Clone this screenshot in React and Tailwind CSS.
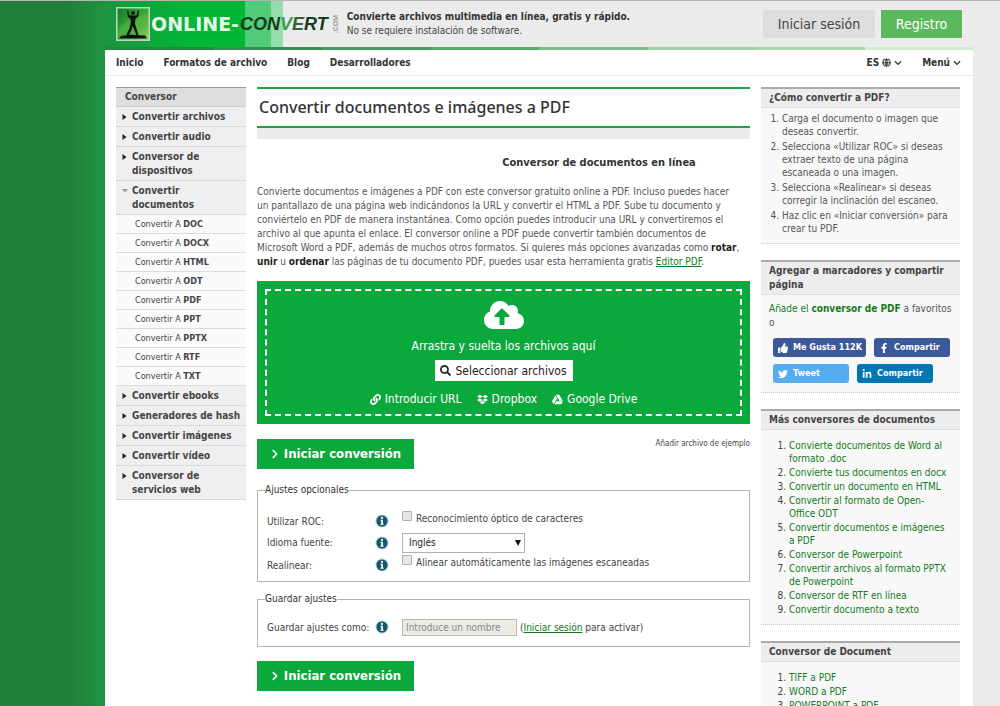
import clsx from "clsx";
import {
  FaChevronDown,
  FaChevronRight,
  FaCloudUploadAlt,
  FaDropbox,
  FaFacebookF,
  FaGlobe,
  FaGoogleDrive,
  FaLink,
  FaLinkedinIn,
  FaSearch,
  FaThumbsUp,
  FaTwitter,
} from "react-icons/fa";

const documentFormats = ["DOC", "DOCX", "HTML", "ODT", "PDF", "PPT", "PPTX", "RTF", "TXT"];

const menu = [
  { label: "Convertir archivos" },
  { label: "Convertir audio" },
  { label: "Conversor de dispositivos" },
  { label: "Convertir documentos", children: documentFormats },
  { label: "Convertir ebooks" },
  { label: "Generadores de hash" },
  { label: "Convertir imágenes" },
  { label: "Convertir vídeo" },
  { label: "Conversor de servicios web" },
];

const steps = [
  "Carga el documento o imagen que deseas convertir.",
  "Selecciona «Utilizar ROC» si deseas extraer texto de una página escaneada o una imagen.",
  "Selecciona «Realinear» si deseas corregir la inclinación del escaneo.",
  "Haz clic en «Iniciar conversión» para crear tu PDF.",
];

const moreConverters = [
  "Convierte documentos de Word al formato .doc",
  "Convierte tus documentos en docx",
  "Convertir un documento en HTML",
  "Convertir al formato de Open-Office ODT",
  "Convertir documentos e imágenes a PDF",
  "Conversor de Powerpoint",
  "Convertir archivos al formato PPTX de Powerpoint",
  "Conversor de RTF en línea",
  "Convertir documento a texto",
];

const documentConverters = ["TIFF a PDF", "WORD a PDF", "POWERPOINT a PDF"];

function Logo() {
  return (
    <a href="#" className="flex items-center" aria-label="Online-Convert.com">
      <svg viewBox="0 0 34 34" className="size-[34px] shrink-0">
        <defs>
          <linearGradient id="logo-bg" x1="0" y1="0" x2="1" y2="1">
            <stop offset="0" stopColor="#0e7a2c" />
            <stop offset="0.5" stopColor="#3fa63c" />
            <stop offset="1" stopColor="#8ccf5a" />
          </linearGradient>
        </defs>
        <rect x="0.75" y="0.75" width="32.5" height="32.5" fill="url(#logo-bg)" stroke="#b9d9bd" strokeWidth="1.5" />
        <path d="M2 24 Q10 10 32 8 V20 Q16 18 2 30Z" fill="#5cbb3f" opacity="0.5" />
        <circle cx="17" cy="6" r="2" fill="#0b160c" />
        <path
          d="M11 3.6 L12.4 4 L13.2 8.2 L15.6 8.4 L18.6 8.4 L20.6 8.2 L21.6 4 L23 3.6 L22.2 9.6 L19.4 12 L19 17 L20.6 22 L22.6 28.6 L20.4 28.6 L18.4 23 L16.8 19 L15.2 23.6 L12.6 28.6 L10.2 28.6 L13.2 22 L14.6 17 L14.6 12 L11.8 9.8Z"
          fill="#0b160c"
        />
        <path d="M3 31.5 L5 29 L9 28.6 L14 27.6 L22 28.2 L29 28.6 L31 31.5Z" fill="#0b160c" />
      </svg>
      <span className="ml-px font-['DejaVu_Sans'] text-[19px] leading-5 font-bold text-[#e6f8e6]">ONLINE-</span>
      <span className="ml-px font-['Liberation_Sans'] text-[18px] leading-5 font-bold text-[#16391f] italic">
        CON<span className="text-[#35a04c]">V</span>
        <span className="text-[#35603f]">E</span>RT
      </span>
      <span className="ml-1 rotate-180 font-['Liberation_Sans'] text-[7px] leading-[8px] font-bold text-[#9b9b9b] [writing-mode:vertical-rl]">
        .COM
      </span>
    </a>
  );
}

function Header() {
  return (
    <header className="flex h-[46px] shrink-0 items-center px-[11px]">
      <Logo />
      <div className="ml-[7px] text-[10px] leading-[14px]">
        <p className="font-bold text-[#333]">Convierte archivos multimedia en línea, gratis y rápido.</p>
        <p className="text-[#444]">No se requiere instalación de software.</p>
      </div>
      <div className="ml-auto flex gap-[6px] text-[14px] leading-7">
        <button type="button" className="w-28 bg-[#dedede] text-[#444]">
          Iniciar sesión
        </button>
        <button type="button" className="w-[81px] bg-[#5cb85c] text-white">
          Registro
        </button>
      </div>
    </header>
  );
}

function StripeBar() {
  return (
    <div className="flex h-[3px] shrink-0">
      <div className="flex-1 bg-[#1f8a3c]" />
      <div className="flex-1 bg-[#3a8f50]" />
      <div className="flex-1 bg-[#4c9a5b]" />
      <div className="flex-1 bg-[#58ad66]" />
      <div className="flex-1 bg-[#7dbb87]" />
      <div className="flex-1 bg-[#a3d0a6]" />
      <div className="flex-1 bg-[#a9d7ac]" />
      <div className="flex-1 bg-[#d3ead3]" />
    </div>
  );
}

function TopNav() {
  return (
    <nav className="flex h-[26px] items-center border-b border-[#ececec] pr-3 pl-[11px] text-[10px] font-bold text-[#333]">
      <div className="flex gap-5">
        <a href="#">Inicio</a>
        <a href="#">Formatos de archivo</a>
        <a href="#">Blog</a>
        <a href="#">Desarrolladores</a>
      </div>
      <div className="ml-auto flex gap-5">
        <a href="#" className="flex items-center gap-[3px]">
          ES <FaGlobe className="size-[9px]" /> <FaChevronDown className="size-2" />
        </a>
        <a href="#" className="flex items-center gap-[3px]">
          Menú <FaChevronDown className="size-2" />
        </a>
      </div>
    </nav>
  );
}

function Sidebar() {
  return (
    <aside className="w-[130px] shrink-0 text-[#444]">
      <h2 className="border-t border-b border-t-[#999] border-b-[#ccc] bg-[#dedede] pl-[9px] text-[10px] leading-[18px] font-bold">
        Conversor
      </h2>
      <ul>
        {menu.map((item) => (
          <li key={item.label}>
            <a
              href="#"
              className="flex border-b border-dotted border-[#c4c4c4] bg-[#efefef] pt-[3px] pr-1 pb-[2px] pl-[6px] text-[10px] leading-[14px] font-bold"
            >
              <svg viewBox="0 0 6 6" className="mt-1 mr-1 size-[6px] shrink-0">
                <path
                  d={item.children ? "M0 1h6L3 4.5Z" : "M0.5 0v6L4.5 3Z"}
                  fill={item.children ? "#999" : "#222"}
                />
              </svg>
              <span className={clsx(item.children && "pr-8")}>{item.label}</span>
            </a>
            {item.children && (
              <ul>
                {item.children.map((format) => (
                  <li key={format} className="border-b border-[#dcdcdc] bg-[#fafafa]">
                    <a href="#" className="block pl-[19px] text-[9px] leading-[18px]">
                      Convertir A <b>{format}</b>
                    </a>
                  </li>
                ))}
              </ul>
            )}
          </li>
        ))}
      </ul>
    </aside>
  );
}

function DropZone() {
  return (
    <div className="mt-3 bg-[#0ba83c] p-2 text-white">
      <div className="flex h-[127px] flex-col items-center border-2 border-dashed border-white pt-1">
        <FaCloudUploadAlt className="size-10" />
        <p className="mt-[3px] text-[12px] leading-4">Arrastra y suelta los archivos aquí</p>
        <button
          type="button"
          className="mt-[6px] flex h-[21px] w-[138px] items-center justify-center gap-1 bg-white text-[12px] text-[#222]"
        >
          <FaSearch className="size-[11px]" /> Seleccionar archivos
        </button>
        <div className="mt-[10px] flex gap-[15px] text-[12px] leading-4">
          <a href="#" className="flex items-center gap-1">
            <FaLink className="size-[11px]" /> Introducir URL
          </a>
          <a href="#" className="flex items-center gap-1">
            <FaDropbox className="size-[11px]" /> Dropbox
          </a>
          <a href="#" className="flex items-center gap-1">
            <FaGoogleDrive className="size-[11px]" /> Google Drive
          </a>
        </div>
      </div>
    </div>
  );
}

function StartButton() {
  return (
    <button
      type="submit"
      className="flex h-[30px] w-[157px] items-center justify-center gap-1 bg-[#0ba83c] text-[13px] font-bold text-white"
    >
      <FaChevronRight className="size-[10px]" /> Iniciar conversión
    </button>
  );
}

function InfoIcon() {
  return (
    <svg viewBox="0 0 14 14" className="size-[14px] shrink-0">
      <circle cx="7" cy="7" r="6.5" fill="#a9cfdd" />
      <circle cx="7" cy="7" r="5.5" fill="#17566b" />
      <circle cx="7" cy="3.9" r="1.1" fill="#fff" />
      <path d="M5.4 5.8h2.5v4h0.8v0.9H5.4v-0.9h0.8V6.7H5.4Z" fill="#fff" />
    </svg>
  );
}

function Settings() {
  return (
    <>
      <fieldset className="mt-[14px] h-[99px] border border-[#b5b5b5] px-[9px] text-[10px] text-[#444]">
        <legend className="-ml-[2px] leading-[14px] text-[#333]">Ajustes opcionales</legend>
        <div className="mt-[13px] flex h-[22px] items-center">
          <label htmlFor="ocr" className="w-[108px]">Utilizar ROC:</label>
          <InfoIcon />
          <label className="mb-[6px] ml-[13px] flex items-center gap-1">
            <input
              id="ocr"
              type="checkbox"
              className="mb-1 size-[10px] appearance-none rounded-[1px] border border-[#b0b0b0] bg-[#e6e6e6]"
            />
            Reconocimiento óptico de caracteres
          </label>
        </div>
        <div className="flex h-[21px] items-center">
          <label htmlFor="lang" className="w-[108px]">Idioma fuente:</label>
          <InfoIcon />
          <div className="relative ml-[13px]">
            <select
              id="lang"
              className="h-5 w-[123px] appearance-none border border-[#b0b0b0] bg-white pl-[6px] text-[10px] text-[#222]"
            >
              <option>Inglés</option>
            </select>
            <svg viewBox="0 0 6 6" className="pointer-events-none absolute top-[7px] right-1 size-[6px]">
              <path d="M0 0h6L3 6Z" fill="#111" />
            </svg>
          </div>
        </div>
        <div className="flex h-[24px] items-center">
          <label htmlFor="deskew" className="w-[108px]">Realinear:</label>
          <InfoIcon />
          <label className="mb-[6px] ml-[13px] flex items-center gap-1">
            <input
              id="deskew"
              type="checkbox"
              className="mb-1 size-[10px] appearance-none rounded-[1px] border border-[#b0b0b0] bg-[#e6e6e6]"
            />
            Alinear automáticamente las imágenes escaneadas
          </label>
        </div>
      </fieldset>

      <fieldset className="mt-[10px] h-[55px] border border-[#b5b5b5] px-[9px] text-[10px] text-[#444]">
        <legend className="-ml-[2px] leading-[14px] text-[#333]">Guardar ajustes</legend>
        <div className="mt-[11px] flex h-[20px] items-center">
          <label htmlFor="save-as" className="w-[108px] whitespace-nowrap">Guardar ajustes como:</label>
          <InfoIcon />
          <input
            id="save-as"
            type="text"
            disabled
            placeholder="Introduce un nombre"
            className="ml-[13px] h-[17px] w-[115px] border border-[#b8b8b8] bg-[#ebebe4] px-[3px] text-[10px] placeholder:text-[#888]"
          />
          <p className="ml-[3px]">
            (<a href="#" className="text-[#137a22] underline">Iniciar sesión</a> para activar)
          </p>
        </div>
      </fieldset>
    </>
  );
}

function Main() {
  return (
    <main className="min-w-0 flex-1">
      <h1 className="border-t-2 border-b-2 border-[#1ba345] pl-[2px] font-['Noto_Sans'] text-[16px] leading-[37px] font-medium text-[#333]">
        Convertir documentos e imágenes a PDF
      </h1>
      <div className="h-[11px] bg-[#ebebeb]" />
      <h2 className="mt-[17px] pl-[191px] text-center text-[11px] leading-[14px] font-bold text-[#333]">
        Conversor de documentos en línea
      </h2>
      <p className="mt-[15px] pr-2 text-[10px] leading-[14px] text-[#555]">
        Convierte documentos e imágenes a PDF con este conversor gratuito online a PDF. Incluso puedes hacer un
        pantallazo de una página web indicándonos la URL y convertir el HTML a PDF. Sube tu documento y conviértelo en
        PDF de manera instantánea. Como opción puedes introducir una URL y convertiremos el archivo al que apunta el
        enlace. El conversor online a PDF puede convertir también documentos de Microsoft Word a PDF, además de muchos
        otros formatos. Si quieres más opciones avanzadas como <b className="text-[#222]">rotar</b>,{" "}
        <b className="text-[#222]">unir</b> u <b className="text-[#222]">ordenar</b> las páginas de tu documento PDF,
        puedes usar esta herramienta gratis{" "}
        <a href="#" className="text-[#137a22] underline">Editor PDF</a>.
      </p>
      <form onSubmit={(e) => e.preventDefault()}>
        <DropZone />
        <div className="mt-[15px] flex items-start justify-between">
          <StartButton />
          <a href="#" className="text-[8px] leading-[10px] text-[#444]">Añadir archivo de ejemplo</a>
        </div>
        <Settings />
        <div className="mt-[14px]">
          <StartButton />
        </div>
      </form>
    </main>
  );
}

function Card({ title, children }) {
  return (
    <section className="border-b border-dotted border-[#c8c8c8] bg-[#f8f8f8]">
      <h3 className="border-t-2 border-b border-t-[#aaa] border-b-[#ddd] bg-[#ededed] px-2 py-[2px] text-[10px] leading-[14px] font-bold text-[#444]">
        {title}
      </h3>
      {children}
    </section>
  );
}

function LinkList({ items }) {
  return (
    <ol className="list-decimal space-y-px pt-[9px] pr-[11px] pb-2 pl-7 text-[10px] leading-[13px] text-[#444]">
      {items.map((item) => (
        <li key={item}>
          <a href="#" className="text-[#137a22]">{item}</a>
        </li>
      ))}
    </ol>
  );
}

function RightColumn() {
  return (
    <aside className="flex w-[199px] shrink-0 flex-col gap-4">
      <Card title="¿Cómo convertir a PDF?">
        <ol className="list-decimal space-y-[2px] pt-1 pr-1 pb-2 pl-[21px] text-[10px] leading-[13px] text-[#555]">
          {steps.map((step) => (
            <li key={step}>{step}</li>
          ))}
        </ol>
      </Card>

      <Card title="Agregar a marcadores y compartir página">
        <p className="px-2 pt-[7px] text-[10px] leading-[14px] text-[#555]">
          <a href="#" className="text-[#137a22]">
            Añade el <b>conversor de PDF</b>
          </a>{" "}
          a favoritos o
        </p>
        <div className="flex flex-wrap gap-x-2 gap-y-[7px] pt-2 pb-[9px] pl-3 text-[9px] leading-[19px] font-bold whitespace-nowrap text-white">
          <button type="button" className="flex w-[93px] items-center gap-[5px] rounded-[3px] bg-[#3b5998] pl-[5px]">
            <FaThumbsUp className="size-[10px] shrink-0" /> Me Gusta 112K
          </button>
          <button type="button" className="flex w-[76px] items-center gap-[5px] rounded-[3px] bg-[#3b5998] pl-[5px]">
            <FaFacebookF className="size-[10px] shrink-0" /> Compartir
          </button>
          <button type="button" className="flex w-[76px] items-center gap-[5px] rounded-[3px] bg-[#55acee] pl-[5px]">
            <FaTwitter className="size-[10px] shrink-0" /> Tweet
          </button>
          <button type="button" className="flex w-[76px] items-center gap-[5px] rounded-[3px] bg-[#0077b5] pl-[5px]">
            <FaLinkedinIn className="size-[10px] shrink-0" /> Compartir
          </button>
        </div>
      </Card>

      <Card title="Más conversores de documentos">
        <LinkList items={moreConverters} />
      </Card>

      <Card title="Conversor de Document">
        <LinkList items={documentConverters} />
      </Card>
    </aside>
  );
}

export default function App() {
  return (
    <div className="flex h-screen overflow-hidden border-t border-[#b5b5b5] bg-[linear-gradient(90deg,#22803f_0px,#22803f_70px,#1e9440_105px,#00b737_190px,#00b737_245px,#52cc77_245px,#52cc77_271px,#93deab_271px,#93deab_283px,#ebebeb_283px)] font-['DejaVu_Sans_Condensed','DejaVu_Sans',sans-serif]">
      <div className="w-[105px] shrink-0" />
      <div className="flex min-w-0 flex-1 flex-col">
        <Header />
        <StripeBar />
        <div className="flex-1 bg-white">
          <TopNav />
          <div className="flex gap-[11px] pt-[11px] pr-[13px] pl-[11px]">
            <Sidebar />
            <Main />
            <RightColumn />
          </div>
        </div>
      </div>
      <div className="w-[27px] shrink-0" />
    </div>
  );
}
